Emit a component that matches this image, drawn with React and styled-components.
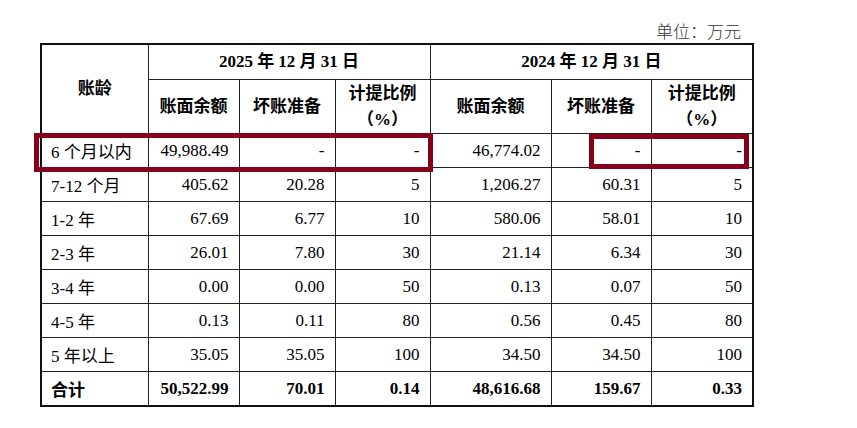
import React from "react";
import styled, { createGlobalStyle } from "styled-components";

const rows = [
  { age: "6 个月以内", a: ["49,988.49", "-", "-"], b: ["46,774.02", "-", "-"] },
  { age: "7-12 个月", a: ["405.62", "20.28", "5"], b: ["1,206.27", "60.31", "5"] },
  { age: "1-2 年", a: ["67.69", "6.77", "10"], b: ["580.06", "58.01", "10"] },
  { age: "2-3 年", a: ["26.01", "7.80", "30"], b: ["21.14", "6.34", "30"] },
  { age: "3-4 年", a: ["0.00", "0.00", "50"], b: ["0.13", "0.07", "50"] },
  { age: "4-5 年", a: ["0.13", "0.11", "80"], b: ["0.56", "0.45", "80"] },
  { age: "5 年以上", a: ["35.05", "35.05", "100"], b: ["34.50", "34.50", "100"] },
];

const total = { age: "合计", a: ["50,522.99", "70.01", "0.14"], b: ["48,616.68", "159.67", "0.33"] };

const colWidths = [107, 91, 96, 95, 121, 100, 102];

function App() {
  return (
    <>
      <GlobalStyle />
      <Page>
        <Unit>单位：万元</Unit>
        <TableWrap>
          <Table>
            <colgroup>
              {colWidths.map((w, i) => (
                <col key={i} style={{ width: w }} />
              ))}
            </colgroup>
            <thead>
              <tr>
                <HeadCell rowSpan={2}>账龄</HeadCell>
                <HeadCell colSpan={3} $h={34}>2025 年 12 月 31 日</HeadCell>
                <HeadCell colSpan={3} $h={34}>2024 年 12 月 31 日</HeadCell>
              </tr>
              <tr>
                <HeadCell $h={53}>账面余额</HeadCell>
                <HeadCell>坏账准备</HeadCell>
                <HeadCell>计提比例<br />（%）</HeadCell>
                <HeadCell>账面余额</HeadCell>
                <HeadCell>坏账准备</HeadCell>
                <HeadCell>计提比例<br />（%）</HeadCell>
              </tr>
            </thead>
            <tbody>
              {rows.map((r) => (
                <tr key={r.age}>
                  <AgeCell>{r.age}</AgeCell>
                  {[...r.a, ...r.b].map((v, i) => (
                    <NumCell key={i}>{v}</NumCell>
                  ))}
                </tr>
              ))}
              <tr>
                <AgeCell $bold>{total.age}</AgeCell>
                {[...total.a, ...total.b].map((v, i) => (
                  <NumCell key={i} $bold>{v}</NumCell>
                ))}
              </tr>
            </tbody>
          </Table>
          <Highlight $left={-6} $top={90} $w={399} $h={39} />
          <Highlight $left={549} $top={91} $w={160} $h={35} />
        </TableWrap>
      </Page>
    </>
  );
}

export default App;

const GlobalStyle = createGlobalStyle`
  body {
    margin: 0;
    background: #ffffff;
    font-family: "Liberation Serif", "Noto Sans CJK SC", serif;
  }
`;

const Page = styled.div`
  width: 712px;
  padding: 19px 0 0 40px;
`;

const Unit = styled.div`
  text-align: right;
  padding-right: 11px;
  font-size: 17px;
  line-height: 24px;
  height: 24px;
  color: #333333;
  font-family: "Noto Sans CJK SC", sans-serif;
  font-weight: 300;
`;

const TableWrap = styled.div`
  position: relative;
  width: 712px;
`;

const Table = styled.table`
  width: 712px;
  table-layout: fixed;
  border-collapse: collapse;
  border: 2px solid #111111;
  color: #000000;
`;

const HeadCell = styled.th`
  border: 1px solid #222222;
  height: ${(p) => (p.$h ? p.$h + "px" : "auto")};
  padding: 0;
  text-align: center;
  vertical-align: middle;
  font-family: "Liberation Serif", "Noto Sans CJK SC", serif;
  font-weight: 700;
  font-size: 17px;
  line-height: 26px;
`;

const AgeCell = styled.td`
  border: 1px solid #222222;
  height: 33px;
  padding: 0 0 0 9px;
  text-align: left;
  font-size: 17px;
  font-weight: ${(p) => (p.$bold ? 700 : 400)};
  font-family: "Liberation Serif", "Noto Sans CJK SC", serif;
  white-space: nowrap;
`;

const NumCell = styled.td`
  border: 1px solid #222222;
  height: 33px;
  padding: 0 10px 0 0;
  text-align: right;
  font-size: 17px;
  font-weight: ${(p) => (p.$bold ? 700 : 400)};
  font-family: "Liberation Serif", serif;
  white-space: nowrap;
`;

const Highlight = styled.div`
  position: absolute;
  left: ${(p) => p.$left}px;
  top: ${(p) => p.$top}px;
  width: ${(p) => p.$w}px;
  height: ${(p) => p.$h}px;
  box-sizing: border-box;
  border: 5px solid #86001a;
  pointer-events: none;
`;
